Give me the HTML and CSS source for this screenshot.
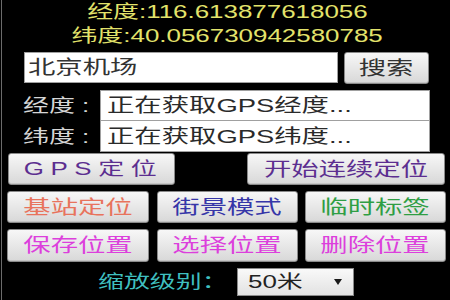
FILE: index.html
```html
<!DOCTYPE html>
<html lang="zh">
<head>
<meta charset="utf-8">
<link rel="stylesheet" href="styles.css">
</head>
<body>
<div class="screen">
  <div class="coords">
    <div class="coord"><span class="st">经度:116.613877618056</span></div>
    <div class="coord"><span class="st">纬度:40.056730942580785</span></div>
  </div>
  <div class="search-row">
    <div class="field search-field"><span class="st left">北京机场</span></div>
    <div class="btn search-btn"><span class="st">搜索</span></div>
  </div>
  <div class="gps-rows">
    <div class="gps-row">
      <div class="gps-label"><span class="st left">经度 :</span></div>
      <div class="field gps-field"><span class="st left">正在获取GPS经度...</span></div>
    </div>
    <div class="gps-row">
      <div class="gps-label"><span class="st left">纬度 :</span></div>
      <div class="field gps-field second"><span class="st left">正在获取GPS纬度...</span></div>
    </div>
  </div>
  <div class="row2">
    <div class="btn purple gps-btn"><span class="st spaced">GPS定位</span></div>
    <div class="btn purple cont-btn"><span class="st">开始连续定位</span></div>
  </div>
  <div class="row3">
    <div class="btn coral"><span class="st">基站定位</span></div>
    <div class="btn blue"><span class="st">街景模式</span></div>
    <div class="btn green"><span class="st">临时标签</span></div>
  </div>
  <div class="row3 row4">
    <div class="btn magenta"><span class="st">保存位置</span></div>
    <div class="btn magenta"><span class="st">选择位置</span></div>
    <div class="btn magenta"><span class="st">删除位置</span></div>
  </div>
  <div class="zoom-row">
    <div class="zlabel"><span class="st left">缩放级别：</span></div>
    <div class="select"><span class="st left">50米</span><span class="caret"></span></div>
  </div>
</div>
</body>
</html>
```
FILE: styles.css
```css
html, body {
  margin: 0;
  background: #000;
}
body {
  font-family: "Liberation Sans", "Noto Sans CJK SC", sans-serif;
}
.screen {
  width: 449px;
  height: 300px;
  margin-left: 1px;
  border-left: 1px solid #6b6b6b;
  box-sizing: border-box;
  overflow: hidden;
}
.st {
  display: inline-block;
  transform: scaleX(1.44);
  white-space: nowrap;
  line-height: 1;
}
.st.left {
  transform-origin: left center;
}
.coords {
  height: 48px;
  display: flex;
  flex-direction: column;
  align-items: center;
  padding-left: 2px;
  color: #e3e36b;
  font-size: 18px;
}
.coord {
  height: 24px;
  line-height: 24px;
}
.coord .st {
  line-height: 24px;
}
.search-row {
  display: flex;
  align-items: flex-start;
  gap: 6px;
  margin-top: 4px;
  padding-left: 22px;
  height: 32px;
}
.field {
  box-sizing: border-box;
  background: #fff;
  border: 1px solid #a0a0a0;
  display: flex;
  align-items: center;
  font-size: 19px;
  color: #2a2a2a;
}
.search-field {
  width: 314px;
  height: 31px;
  padding-left: 3px;
  color: #333;
}
.btn {
  box-sizing: border-box;
  display: flex;
  align-items: center;
  justify-content: center;
  background: linear-gradient(#f7f7f7, #d8d8d8);
  border: 1px solid #8a8a8a;
  border-radius: 3px;
  box-shadow: inset 0 -1px 0 #c4c4c4;
  font-size: 19px;
  color: #333;
}
.search-btn {
  width: 85px;
  height: 32px;
}
.gps-rows {
  margin-top: 6px;
}
.gps-row {
  display: flex;
  height: 31px;
  padding-left: 21px;
}
.gps-label {
  width: 77px;
  display: flex;
  align-items: center;
  color: #d6d6d6;
  font-size: 18px;
}
.gps-field {
  width: 330px;
  height: 31px;
  padding-left: 6px;
}
.gps-field.second {
  border-top: 0;
}
.row2 {
  display: flex;
  gap: 72px;
  margin-top: 1px;
  padding-left: 6px;
  height: 32px;
}
.gps-btn {
  width: 167px;
}
.cont-btn {
  width: 198px;
}
.spaced {
  letter-spacing: 4.6px;
  margin-right: -4.6px;
  font-size: 18px;
}
.row3 {
  display: grid;
  grid-template-columns: 142px 141px 141px;
  column-gap: 7.5px;
  margin-top: 6px;
  padding-left: 5px;
  height: 32px;
}
.row4 {
  height: 33px;
}
.purple { color: #5c2e90; }
.coral { color: #e8735c; }
.blue { color: #3636a8; }
.green { color: #2f9e44; }
.magenta { color: #dc3fdc; }
.zoom-row {
  display: flex;
  align-items: center;
  margin-top: 6px;
  height: 28px;
  padding-left: 96px;
}
.zlabel {
  width: 139px;
  color: #3fbfbf;
  font-size: 18px;
}
.select {
  box-sizing: border-box;
  width: 117px;
  height: 28px;
  border: 1px solid #8a8a8a;
  background: linear-gradient(#f9f9f9, #e2e2e2);
  display: flex;
  align-items: center;
  justify-content: space-between;
  padding: 0 11px 0 10px;
  font-size: 18px;
  color: #222;
}
.caret {
  width: 0;
  height: 0;
  border-left: 4px solid transparent;
  border-right: 4px solid transparent;
  border-top: 6px solid #1a1a1a;
}
```
